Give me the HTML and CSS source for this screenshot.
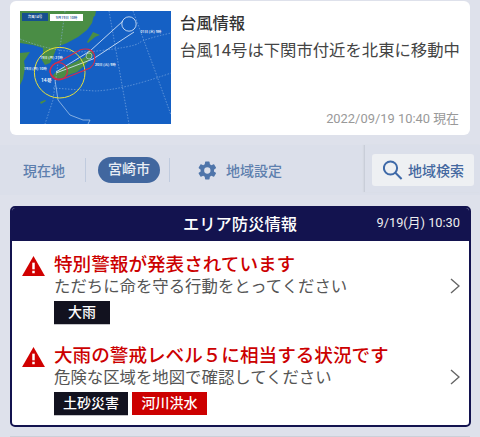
FILE: index.html

```html
<!DOCTYPE html>
<html lang="ja">
<head>
  <meta charset="UTF-8" />
  <meta name="viewport" content="width=device-width, initial-scale=1.0"/>
  <title>エリア防災情報</title>
  <link rel="stylesheet" href="styles.css">
</head>
<body>

<section class="typhoon-card">
  <svg class="typhoon-map" viewBox="0 0 151 113" role="img" aria-label="台風14号の進路図">
    <rect width="151" height="113" fill="#1560c4"/>
    <!-- land -->
    <g fill="#4a8d45">
      <path d="M0 0H75L72 12 67 19 58 26 47 32 37 36 33 46 30 52 25 54 22 49 23 42 23 37 13 34 0 32Z"/>
      <path d="M0 42L10 41 4 50 5 57 3 68 0 74Z"/>
      <path d="M33 64L37 60 43 57 53 52 65 46 69 39 73 41 72 46 65 54 57 61 48 64 42 67 35 68Z"/>
      <path d="M67 31L73 21 80 24 75 26 68 32Z"/>
      <path d="M71 0H76L75 5 72 6Z"/>
      <path d="M20 91L25 89 26 90 21 93Z"/>
    </g>
    <!-- graticule -->
    <g fill="none" stroke="#8db4e4" stroke-width=".6" stroke-dasharray="1.5 1.5">
      <path d="M0 28Q40 44 77 40T119 32 151 22"/>
      <path d="M33 77L75 80Q103 79 151 62"/>
      <path d="M45 0L33 89 25 113"/>
      <path d="M89 0L99 57 109 113"/>
      <path d="M113 0L134 57 151 104"/>
    </g>
    <!-- track -->
    <g fill="none" stroke="#cfe0f5">
      <path d="M36 61L70 40 103 10M36 62L73 48 114 21" stroke-width=".9"/>
      <circle cx="109" cy="13" r="7.2" stroke-width=".9"/>
      <circle cx="69" cy="45" r="3" stroke-width=".6"/>
      <path d="M35 69L38 89 50 104 63 109 70 109 68 113" stroke-width=".6"/>
    </g>
    <!-- storm zone -->
    <circle cx="39.7" cy="61.7" r="25.3" fill="none" stroke="#e6e03a" stroke-width="1"/>
    <circle cx="38.7" cy="60.3" r="8.7" fill="none" stroke="#d62c48" stroke-width="1.1"/>
    <path d="M30 61C30 54 36 52 42 49L60 39C66 37 72 38 74 43 76 49 74 54 70 57L48 66C42 69 33 70 30 61Z" fill="none" stroke="#d62c48" stroke-width="1.1"/>
    <!-- labels -->
    <rect x="2" y="2" width="26" height="8" fill="#16508f"/>
    <rect x="30" y="3" width="33" height="7" fill="#fff"/>
    <text class="map-label" x="15" y="7.4" text-anchor="middle">台風14号</text>
    <text class="map-label map-label-date" x="46.5" y="7.6" text-anchor="middle">9月19日 10時</text>
    <text class="map-label" x="120.5" y="22">21日 (水) 9時</text>
    <text class="map-label" x="75" y="55">20日 (火) 9時</text>
    <text class="map-label" x="20" y="48">19日 (月) 21時</text>
    <text class="map-label" x="4" y="59">19日 (月) 10時</text>
    <text class="map-label map-label-name" x="21" y="71">14号</text>
  </svg>
  <div class="typhoon-body">
    <h2 class="typhoon-title">台風情報</h2>
    <p class="typhoon-text">台風14号は下関市付近を北東に移動中</p>
    <p class="typhoon-time">2022/09/19 10:40 現在</p>
  </div>
</section>

<nav class="area-nav">
  <div class="area-tabs">
    <a class="area-tab">現在地</a>
    <span class="area-sep"></span>
    <a class="area-pill">宮崎市</a>
    <span class="area-sep"></span>
    <a class="area-setting">
      <svg class="gear-icon" viewBox="0 0 24 24">
        <path d="M19.4 13c.04-.32.06-.66.06-1s-.02-.68-.07-1l2.16-1.68c.2-.15.25-.43.13-.65l-2.05-3.54c-.12-.23-.4-.3-.62-.23l-2.55 1.03c-.53-.4-1.1-.74-1.73-1L14.34 2.2A.5.5 0 0 0 13.84 1.8H9.75a.5.5 0 0 0-.5.42L8.87 4.93c-.62.26-1.2.6-1.73 1L4.6 4.9c-.23-.08-.5 0-.62.23L1.93 8.67c-.13.22-.07.5.12.65L4.2 11c-.04.32-.08.66-.08 1s.02.68.07 1l-2.16 1.68c-.2.15-.25.43-.13.65l2.05 3.54c.12.23.4.3.62.23l2.55-1.03c.53.4 1.1.74 1.73 1l.38 2.71c.05.24.26.42.5.42h4.1c.25 0 .46-.18.5-.42l.38-2.71c.62-.26 1.2-.6 1.73-1l2.55 1.03c.23.08.5 0 .62-.23l2.05-3.54c.12-.22.07-.5-.13-.65ZM11.8 15.6a3.6 3.6 0 1 1 0-7.2 3.6 3.6 0 0 1 0 7.2Z"/>
      </svg>
      地域設定
    </a>
  </div>
  <div class="area-search-wrap">
    <a class="area-search">
      <svg class="search-icon" viewBox="0 0 20 20">
        <circle cx="7.5" cy="8" r="6.6"/>
        <path d="M12.4 12.8L18.6 19"/>
      </svg>
      地域検索
    </a>
  </div>
</nav>

<section class="alert-box">
  <header class="alert-head">
    <h2 class="alert-heading">エリア防災情報</h2>
    <span class="alert-date">9/19(月) 10:30</span>
  </header>

  <div class="alert-row">
    <svg class="warn-icon" viewBox="0 0 24 21">
      <path d="M12 0L24 21H0Z"/>
      <rect class="warn-mark" x="10.7" y="7" width="2.6" height="7"/>
      <rect class="warn-mark" x="10.7" y="15.5" width="2.6" height="2.6"/>
    </svg>
    <div class="alert-main">
      <h3 class="alert-title">特別警報が発表されています</h3>
      <p class="alert-desc">ただちに命を守る行動をとってください</p>
      <div class="tags">
        <span class="tag tag-black tag-wide">大雨</span>
      </div>
    </div>
    <svg class="chevron" viewBox="0 0 10 16"><path d="M1 1L9 8 1 15"/></svg>
  </div>

  <div class="alert-row">
    <svg class="warn-icon" viewBox="0 0 24 21">
      <path d="M12 0L24 21H0Z"/>
      <rect class="warn-mark" x="10.7" y="7" width="2.6" height="7"/>
      <rect class="warn-mark" x="10.7" y="15.5" width="2.6" height="2.6"/>
    </svg>
    <div class="alert-main">
      <h3 class="alert-title">大雨の警戒レベル５に相当する状況です</h3>
      <p class="alert-desc">危険な区域を地図で確認してください</p>
      <div class="tags">
        <span class="tag tag-black">土砂災害</span>
        <span class="tag tag-red">河川洪水</span>
      </div>
    </div>
    <svg class="chevron" viewBox="0 0 10 16"><path d="M1 1L9 8 1 15"/></svg>
  </div>
</section>

<div class="next-card"></div>

</body>
</html>
```

FILE: styles.css

```css
* { box-sizing: border-box; margin: 0; padding: 0; }

body, html {
  font-family: Roboto, 'Noto Sans CJK JP', sans-serif;
  background-color: #dee1eb;
  color: #333;
  overflow: hidden;
}

body {
  height: 437px;
  padding-top: 1px;
}

/* typhoon card */
.typhoon-card {
  display: flex;
  gap: 9px;
  height: 134px;
  margin: 0 10px;
  padding: 10px;
  background-color: #fff;
  border-radius: 6px;
}

.typhoon-map {
  flex: none;
  width: 151px;
  height: 113px;
}

.map-label {
  font-size: 3.5px;
  font-weight: 500;
  fill: #fff;
}

.map-label-date { fill: #16508f; }

.map-label-name { font-size: 5px; }

.typhoon-body {
  flex: 1;
  display: flex;
  flex-direction: column;
}

.typhoon-title {
  font-size: 16.3px;
  font-weight: 500;
  line-height: 24px;
  margin-top: 1px;
  color: #333;
}

.typhoon-text {
  font-size: 16.35px;
  line-height: 24px;
  margin-top: 3px;
  color: #444;
  white-space: nowrap;
}

.typhoon-time {
  margin-top: auto;
  font-size: 12.9px;
  line-height: 16px;
  text-align: right;
  color: #999;
  white-space: nowrap;
  margin-right: 1px;
  margin-bottom: -2px;
}

/* area nav */
.area-nav {
  display: flex;
  margin-top: 10px;
  height: 50px;
  background-color: #dbdfea;
}

.area-tabs {
  flex: 1;
  display: flex;
  align-items: center;
  padding-left: 23px;
  font-size: 14px;
  font-weight: 500;
  color: #5e7fae;
}

.area-tab { width: 42px; white-space: nowrap; }

.area-sep {
  width: 1px;
  height: 24px;
  background-color: #c0cbde;
}

.area-tab + .area-sep { margin-left: 20px; }

.area-pill {
  width: 62px;
  height: 26px;
  margin: 0 9px 0 12px;
  border-radius: 13px;
  background-color: #41679f;
  color: #e9edf4;
  line-height: 25px;
  text-align: center;
}

.area-setting {
  display: flex;
  align-items: center;
  gap: 8px;
  margin-left: 27px;
  white-space: nowrap;
}

.gear-icon {
  width: 21px;
  height: 21px;
  fill: #4f75aa;
}

.area-search-wrap {
  flex: none;
  width: 116px;
  height: 47px;
  padding: 9px 0 0 7px;
  border-left: 1px solid #c9ced9;
  box-shadow: -1px 0 1px #d4d8e2;
}

.area-search {
  display: flex;
  align-items: center;
  gap: 5px;
  width: 102px;
  height: 32px;
  padding-left: 11px;
  border-radius: 3px;
  background-color: #eef0f3;
  font-size: 14px;
  font-weight: 500;
  color: #4468a0;
  white-space: nowrap;
}

.search-icon {
  flex: none;
  width: 20px;
  height: 20px;
  fill: none;
  stroke: #3e69a8;
  stroke-width: 2;
}

/* alert box */
.alert-box {
  height: 221px;
  margin: 11px 9px 0 10px;
  background-color: #fff;
  border: 2px solid #13134f;
  border-radius: 5px;
  overflow: hidden;
}

.alert-head {
  position: relative;
  height: 33px;
  background-color: #13134f;
  color: #fff;
  text-align: center;
}

.alert-heading {
  font-size: 16.3px;
  font-weight: 500;
  line-height: 34px;
  padding-right: 1px;
}

.alert-date {
  position: absolute;
  top: 7px;
  right: 9px;
  font-size: 12.8px;
  line-height: 16px;
  color: #eee;
}

.alert-row {
  display: flex;
  height: 91px;
  padding: 12px 0 0 10px;
}

.warn-icon {
  flex: none;
  width: 23px;
  height: 20px;
  margin: 3px 9px 0 0;
  fill: #d00000;
}

.warn-mark { fill: #fff; }

.alert-main { flex: 1; min-width: 0; }

.alert-title {
  font-size: 18.6px;
  font-weight: 500;
  line-height: 24px;
  color: #cc0000;
  white-space: nowrap;
}

.alert-desc {
  font-size: 16.4px;
  line-height: 20px;
  color: #555;
  white-space: nowrap;
}

.tags {
  display: flex;
  gap: 4px;
  margin-top: 4px;
}

.tag {
  width: 75px;
  height: 23px;
  font-size: 14px;
  font-weight: 500;
  line-height: 22px;
  text-align: center;
  color: #fff;
  white-space: nowrap;
}

.tag-black {
  width: 74px;
  background-color: #12121f;
  box-shadow: 0 1px 0 #c4c4c8;
}

.tag-black.tag-wide { width: 56px; }

.tag-red { background-color: #cc0000; }

.chevron {
  flex: none;
  width: 10px;
  height: 16px;
  margin: 25px 9px 0 0;
  fill: none;
  stroke: #666;
  stroke-width: 1.4;
}

.next-card {
  margin: 9px 10px 0;
  border-top: 1px solid #ccd0d9;
}
```
